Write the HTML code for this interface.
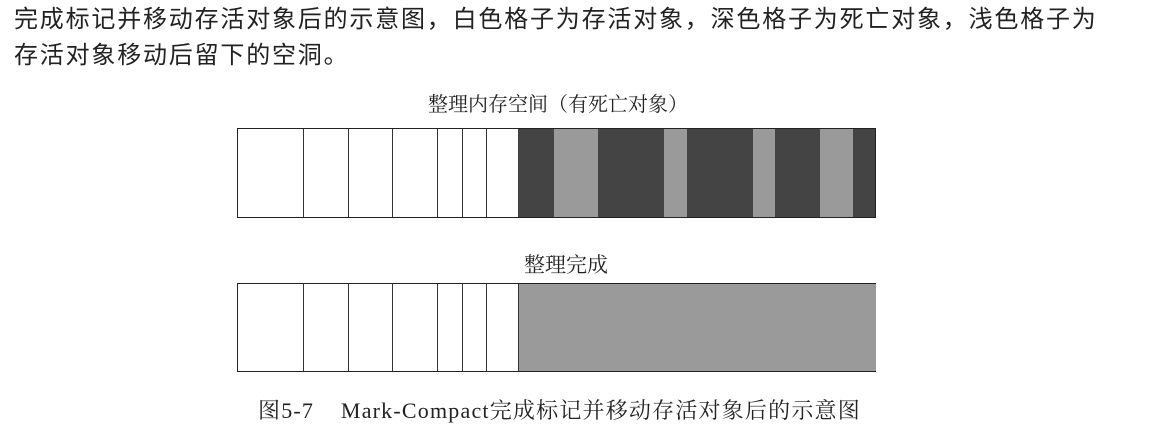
<!DOCTYPE html>
<html><head><meta charset="utf-8"><style>
body{margin:0;width:1152px;height:435px;background:#fff;position:relative;overflow:hidden;font-family:"Liberation Sans","Noto Sans CJK SC",sans-serif;}
.p{position:absolute;left:14px;font-size:24px;line-height:30px;color:#222;white-space:nowrap;letter-spacing:1.8px}
.bar{position:absolute;left:237px;width:639px;box-sizing:border-box;border:1.5px solid #222;background:#fff}
.v{position:absolute;top:0;bottom:0;border-left:1.5px solid #333}
.b{position:absolute;top:0;bottom:0}
.d{background:#444}.l{background:#9a9a9a}
.t{position:absolute;font-family:"Liberation Serif","Noto Serif CJK SC",serif;font-size:20px;color:#222;white-space:nowrap}
</style></head><body>
<div class="p" style="top:5px">完成标记并移动存活对象后的示意图，白色格子为存活对象，深色格子为死亡对象，浅色格子为</div>
<div class="p" style="top:41px">存活对象移动后留下的空洞。</div>
<div class="t" style="left:428px;top:88px">整理内存空间（有死亡对象）</div>
<div class="bar" style="top:128px;height:90px">
<div class="v" style="left:65px"></div><div class="v" style="left:110px"></div><div class="v" style="left:154px"></div><div class="v" style="left:199px"></div><div class="v" style="left:224px"></div><div class="v" style="left:248px"></div>
<div class="b d" style="left:280px;width:36px"></div>
<div class="b l" style="left:316px;width:44px"></div>
<div class="b d" style="left:360px;width:66px"></div>
<div class="b l" style="left:426px;width:23px"></div>
<div class="b d" style="left:449px;width:66px"></div>
<div class="b l" style="left:515px;width:22px"></div>
<div class="b d" style="left:537px;width:45px"></div>
<div class="b l" style="left:582px;width:33px"></div>
<div class="b d" style="left:615px;width:22px"></div>
</div>
<div class="t" style="left:524px;top:249px;font-size:21px">整理完成</div>
<div class="bar" style="top:283px;height:89px">
<div class="v" style="left:65px"></div><div class="v" style="left:110px"></div><div class="v" style="left:154px"></div><div class="v" style="left:199px"></div><div class="v" style="left:224px"></div><div class="v" style="left:248px"></div>
<div class="b l" style="left:280px;width:357px;border-left:1.5px solid #333"></div>
</div>
<div class="t" style="left:258px;top:394px;font-size:22px;letter-spacing:1.2px">图5-7&nbsp;&nbsp;&nbsp; Mark-Compact完成标记并移动存活对象后的示意图</div>
</body></html>
